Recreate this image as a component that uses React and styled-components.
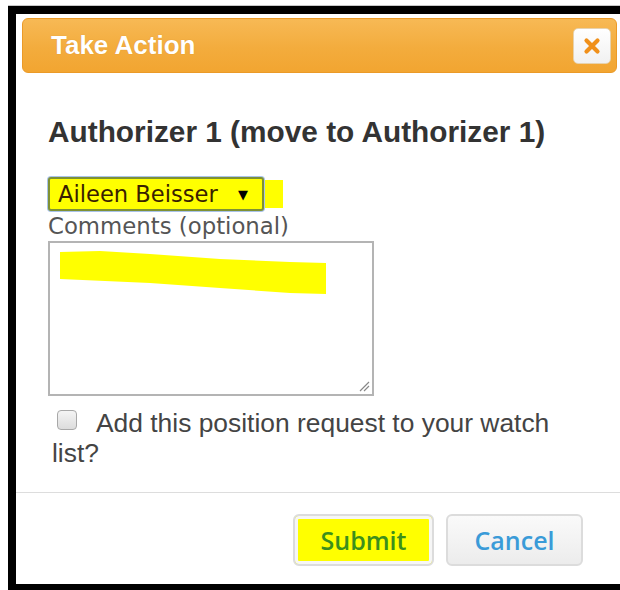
import React from 'react';
import styled, { createGlobalStyle } from 'styled-components';

const GlobalStyle = createGlobalStyle`
  html, body {
    margin: 0;
    padding: 0;
    background: #ffffff;
    overflow: hidden;
  }
  body {
    font-family: "Liberation Sans", Arial, sans-serif;
  }
`;

const Frame = styled.div`
  box-sizing: border-box;
  margin: 6px 0 0 8px;
  width: 640px;
  height: 584px;
  border-style: solid;
  border-color: #000;
  border-width: 8px 8px 6px 8px;
  box-shadow: 0 -1px 0 #c8c8c8;
  background: #fff;
  display: flex;
  flex-direction: column;
`;

const Header = styled.div`
  margin: 4px 23px 0 6px;
  height: 55px;
  box-sizing: border-box;
  border: 1px solid #eb9a27;
  border-radius: 6px;
  background: linear-gradient(#f7b955, #f3ac3d 55%, #f2a531);
  display: flex;
  align-items: center;
  justify-content: space-between;
  padding: 0 5px 0 28px;
`;

const Title = styled.span`
  color: #fff;
  font-weight: bold;
  font-size: 26px;
  text-shadow: 0 0 1px rgba(160, 90, 0, 0.4);
`;

const CloseButton = styled.button`
  width: 38px;
  height: 36px;
  padding: 0;
  border: 1px solid #e7d2ad;
  border-radius: 5px;
  background: linear-gradient(#ffffff, #f1f1f1);
  display: flex;
  align-items: center;
  justify-content: center;
`;

const Body = styled.div`
  padding: 42px 60px 0 32px;
  flex: 1;
`;

const Heading = styled.h2`
  margin: 0;
  font-size: 29.8px;
  line-height: 34px;
  font-weight: bold;
  color: #333;
  white-space: nowrap;
`;

/* select with a highlighter stroke trailing off to the right */
const Select = styled.div`
  margin-top: 28px;
  box-sizing: border-box;
  width: 216px;
  height: 34px;
  border: 2px solid #7f9133;
  border-radius: 3px;
  box-shadow: 0 0 0 1px #a9c3ea, 22px 0 0 -3px #ffff00;
  background: #ffff00;
  display: flex;
  align-items: center;
  justify-content: space-between;
  padding: 0 14px 0 8px;
  font-family: "DejaVu Sans", Verdana, sans-serif;
  font-size: 22.6px;
  color: #3a1f00;
`;

const Arrow = styled.span`
  font-size: 13px;
  color: #000;
`;

const Label = styled.div`
  font-family: "DejaVu Sans", Verdana, sans-serif;
  font-size: 22.8px;
  line-height: 30px;
  color: #555;
`;

const TextBox = styled.div`
  position: relative;
  box-sizing: border-box;
  width: 326px;
  height: 155px;
  border: 2px solid #b4b4b4;
  background: #fff;
`;

const Scribble = styled.svg`
  position: absolute;
  left: 10px;
  top: 7px;
`;

const Grip = styled.svg`
  position: absolute;
  right: 2px;
  bottom: 2px;
`;

const WatchRow = styled.label`
  display: block;
  margin-top: 12px;
  padding-left: 4px;
  font-size: 26.4px;
  line-height: 30px;
  color: #444;
`;

const Check = styled.span`
  display: inline-block;
  vertical-align: 2px;
  box-sizing: border-box;
  width: 20px;
  height: 20px;
  margin: 0 19px 0 5px;
  border: 1px solid #a8a8a8;
  border-radius: 4px;
  background: linear-gradient(#f4f4f4, #dcdcdc);
`;

const ButtonPane = styled.div`
  margin-top: 24px;
  border-top: 1px solid #dddddd;
  padding: 21px 57px 0 0;
  height: 70px;
  display: flex;
  justify-content: flex-end;
  gap: 12px;
`;

const Button = styled.button`
  box-sizing: border-box;
  width: ${p => p.$w}px;
  height: 52px;
  border: 2px solid #dcdcdc;
  border-radius: 6px;
  background: ${p => (p.$marked ? '#ffff00' : 'linear-gradient(#fafafa, #ececec)')};
  box-shadow: ${p => (p.$marked ? 'inset 0 0 0 3px #f6f6f6' : 'none')};
  font-family: "Open Sans", "Liberation Sans", sans-serif;
  font-weight: 600;
  font-size: 25px;
  color: ${p => p.$color};
  padding: 0;
`;

export default function App() {
  return (
    <>
      <GlobalStyle />
      <Frame>
        <Header>
          <Title>Take Action</Title>
          <CloseButton aria-label="close">
            <svg width="18" height="18" viewBox="0 0 18 18">
              <path d="M3.5 3.5 L14.5 14.5 M14.5 3.5 L3.5 14.5" stroke="#f0901a" strokeWidth="4.2" strokeLinecap="round" />
            </svg>
          </CloseButton>
        </Header>
        <Body>
          <Heading>Authorizer 1 (move to Authorizer 1)</Heading>
          <Select>
            <span>Aileen Beisser</span>
            <Arrow>▼</Arrow>
          </Select>
          <Label>Comments (optional)</Label>
          <TextBox>
            <Scribble width="268" height="46" viewBox="0 0 268 46">
              <path d="M0 2 L40 1 L90 4 L160 9 L230 12 L266 13 L266 44 L230 43 L160 38 L90 33 L0 29 Z" fill="#ffff00" />
            </Scribble>
            <Grip width="12" height="12" viewBox="0 0 12 12">
              <path d="M11 2 L2 11 M11 6 L6 11" stroke="#888" strokeWidth="1.2" />
            </Grip>
          </TextBox>
          <WatchRow>
            <Check />
            Add this position request to your watch list?
          </WatchRow>
        </Body>
        <ButtonPane>
          <Button $w={141} $marked $color="#3c8f1c">Submit</Button>
          <Button $w={137} $color="#3a9bd8">Cancel</Button>
        </ButtonPane>
      </Frame>
    </>
  );
}
